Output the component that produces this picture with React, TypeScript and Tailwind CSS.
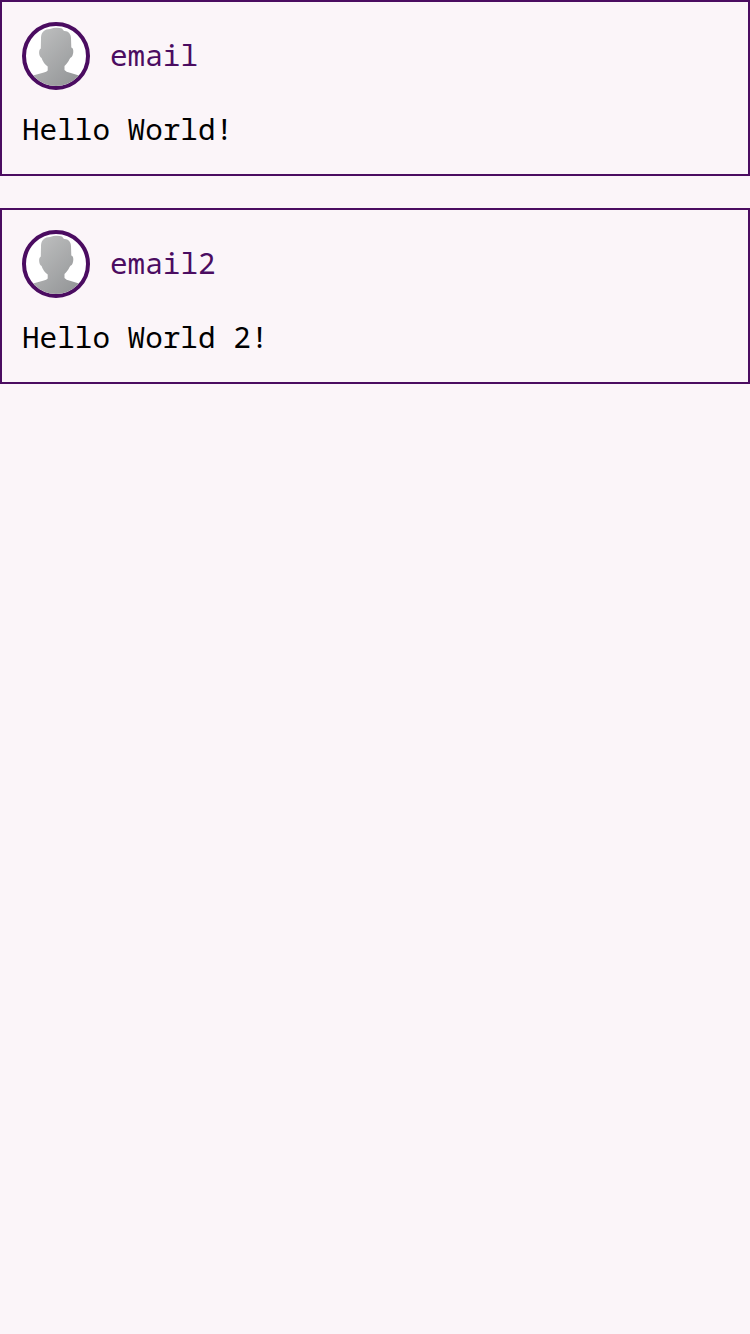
function Avatar() {
  return (
    <svg viewBox="0 0 60 60" className="size-[68px] shrink-0 rounded-full border-4 border-[#4b0c61] bg-white">
      <defs>
        <linearGradient id="person" x1="0" y1="0" x2="1" y2="1">
          <stop offset="0" stopColor="#c4c5c5" />
          <stop offset="1" stopColor="#8e9092" />
        </linearGradient>
      </defs>
      <path fill="url(#person)" d="M15 12C15 6 19 3 24 3C28 1.5 33 1.5 36 2.5L38 5C42 4.5 45 8 45 12L45.3 21.5C48.5 22 47.5 30 45 31.5C43.5 32 43 36 38.5 40L38.5 44Q40 46 44 46.7L53 49.5L60 60H0L7 49.5L17 46.8Q21 46 21.7 44.5V40.5Q17 37 15.6 32C13 31 12 24 14.8 22.5Z" />
    </svg>
  );
}

function Post({ author, text }: { author: string; text: string }) {
  return (
    <article className="h-[176px] border-2 border-[#4b0c61] p-5">
      <header className="flex items-center gap-5 text-[#4b0c61]">
        <Avatar />
        <span className="pb-0.5">{author}</span>
      </header>
      <p className="mt-[19px] text-black">{text}</p>
    </article>
  );
}

export default function App() {
  return (
    <main className="flex min-h-screen flex-col gap-8 bg-[#fbf5f9] font-['Noto_Sans_Mono','DejaVu_Sans_Mono',monospace] text-[29.33px] leading-10">
      <Post author="email" text="Hello World!" />
      <Post author="email2" text="Hello World 2!" />
    </main>
  );
}
